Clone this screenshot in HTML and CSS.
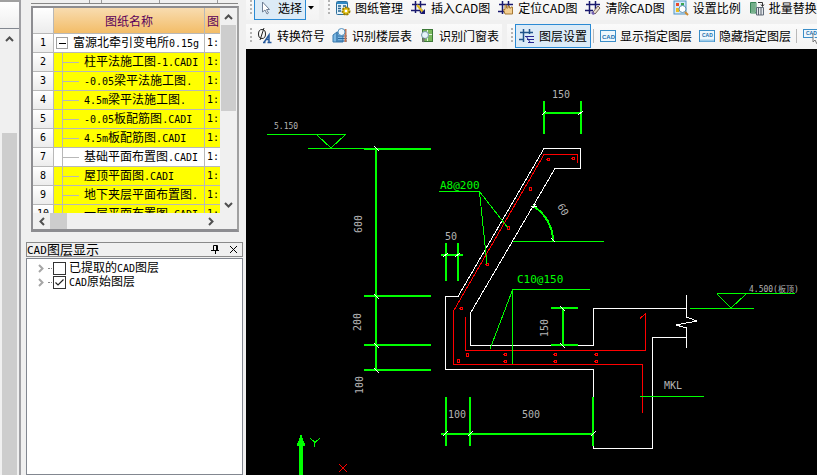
FILE: index.html
```html
<!DOCTYPE html>
<html lang="zh-CN">
<head>
<meta charset="utf-8">
<title>CAD图层</title>
<link rel="stylesheet" href="styles.css">
</head>
<body>
<div class="app">
  <aside class="rail">
    <div class="rail-head"></div>
    <div class="rail-scroll">
      <button class="sb-btn rail-up" aria-label="向上"><svg width="9" height="6"><path class="chev" d="M1 5 4.500 1.500 8 5"/></svg></button>
      <div class="rail-thumb"></div>
    </div>
  </aside>

  <section class="side">
    <div class="tabs"><i class="t1"></i><i class="t2"></i><i class="t3"></i><i class="t4"></i></div>
    <div class="grid-box">
      <div class="grid-view">
        <table class="sheet">
          <colgroup><col class="c-num"><col class="c-name"><col class="c-ratio"></colgroup>
          <thead><tr><th class="num"></th><th>图纸名称</th><th class="ratio">图</th></tr></thead>
          <tbody>
            <tr class="root"><td class="num">1</td><td><button class="fold" aria-label="折叠"></button>富源北牵引变电所<span>0.15g</span></td><td class="ratio">1:</td></tr>
            <tr class="hot"><td class="num">2</td><td class="kid">柱平法施工图<span>-1.CADI</span></td><td class="ratio">1:</td></tr>
            <tr class="hot"><td class="num">3</td><td class="kid"><span>-0.05</span>梁平法施工图<span>.</span></td><td class="ratio">1:</td></tr>
            <tr class="hot"><td class="num">4</td><td class="kid"><span>4.5m</span>梁平法施工图<span>.</span></td><td class="ratio">1:</td></tr>
            <tr class="hot"><td class="num">5</td><td class="kid"><span>-0.05</span>板配筋图<span>.CADI</span></td><td class="ratio">1:</td></tr>
            <tr class="hot"><td class="num">6</td><td class="kid"><span>4.5m</span>板配筋图<span>.CADI</span></td><td class="ratio">1:</td></tr>
            <tr><td class="num">7</td><td class="kid">基础平面布置图<span>.CADI</span></td><td class="ratio">1:</td></tr>
            <tr class="hot"><td class="num">8</td><td class="kid">屋顶平面图<span>.CADI</span></td><td class="ratio">1:</td></tr>
            <tr class="hot"><td class="num">9</td><td class="kid">地下夹层平面布置图<span>.</span></td><td class="ratio">1:</td></tr>
            <tr class="hot"><td class="num">10</td><td class="kid">一层平面布置图<span>.CADI</span></td><td class="ratio">1:</td></tr>
          </tbody>
        </table>
      </div>
      <div class="vbar">
        <button class="sb-btn" aria-label="向上"><svg width="9" height="6"><path class="chev" d="M1 5 4.500 1.500 8 5"/></svg></button>
        <div class="vthumb"></div>
        <button class="sb-btn" aria-label="向下"><svg width="9" height="6"><path class="chev" d="M1 1 4.500 4.500 8 1"/></svg></button>
      </div>
      <div class="hbar">
        <button class="sb-btn" aria-label="向左"><svg width="6" height="9"><path class="chev" d="M5 1 1.500 4.500 5 8"/></svg></button>
        <div class="hthumb"></div>
        <button class="sb-btn hright" aria-label="向右"><svg width="6" height="9"><path class="chev" d="M1 1 4.500 4.500 1 8"/></svg></button>
      </div>
    </div>

    <div class="layers">
      <header class="layers-head">
        <h2><span>CAD</span>图层显示</h2>
        <button aria-label="固定"><svg width="9" height="10"><path d="M2.500 5V.5H6.500V5M5.500 0V5M0 5.500H8M4.500 6V9" fill="none" stroke="#000"/></svg></button>
        <button aria-label="关闭"><svg width="9" height="9"><path d="M1 1 8 8M8 1 1 8" fill="none" stroke="#000"/></svg></button>
      </header>
      <div class="tree">
        <label><svg width="6" height="9"><path class="chev soft" d="M1 1 4.500 4.500 1 8"/></svg><i></i><input type="checkbox"><b>已提取的<span>CAD</span>图层</b></label>
        <label><svg width="6" height="9"><path class="chev soft" d="M1 1 4.500 4.500 1 8"/></svg><i></i><input type="checkbox" checked><b><span>CAD</span>原始图层</b></label>
      </div>
    </div>
  </section>

  <main class="work">
    <div class="toolbar top">
      <div class="strip">
        <b class="grip"></b>
        <button class="tool on pick"><svg width="16" height="16"><path d="M4.500 2V12L7 10 9 14 10.500 13 8.500 9.500H11.500Z" fill="#fff" stroke="#6f7f96"/></svg>选择</button>
        <button class="drop" aria-label="更多选择"><svg width="6" height="4"><path d="M0 0H6L3 3.500Z" fill="#000"/></svg></button>
      </div>
      <div class="strip rest">
        <b class="grip"></b>
        <button class="tool"><svg width="16" height="16"><rect x="1.500" y="1.500" width="11" height="13" rx="1" fill="#e3f2fb" stroke="#2d6f9c"/><path d="M2 2H12V4H2Z" fill="#2f89c5"/><path d="M3 6H6M3 8.500H6M3 11H6M8 6H11" stroke="#24628f" stroke-width="1.500"/><circle cx="11" cy="11" r="3.500" fill="#e8c81c" stroke="#9b7d00" stroke-dasharray="2 1" stroke-width="2"/><circle cx="11" cy="11" r="1.300" fill="#fff"/></svg>图纸管理</button>
        <button class="tool"><svg width="16" height="16"><path d="M4.500 1V13M9.500 1V13M1 4.500H15M0 10.500H12" stroke="#19196e" stroke-width="1.500"/><path d="M6 5 12 12" stroke="#e3bd1e" stroke-width="2"/><path d="M14 9V14H9Z" fill="#19196e"/></svg>插入CAD图</button>
        <button class="tool"><svg width="16" height="16"><path d="M4.500 1V14M10.500 1V7M1 4.500H15M0 11.500H6" stroke="#19196e" stroke-width="1.500"/><path d="M7 14 5.500 9.500H7V5H8.500V8H10V6H11.500V8H13V7H14.500V14Z" fill="#f3cf92" stroke="#a67935"/></svg>定位CAD图</button>
        <button class="tool"><svg width="16" height="16"><path d="M4.500 1V14M10.500 1V9M1 4.500H15M0 10.500H8" stroke="#19196e" stroke-width="1.500"/><path d="M8 12 13 6 15 8 10 14Z" fill="#e9dfcf" stroke="#715f50"/><path d="M6 13 8 11 10 14 8 15Z" fill="#7462b4"/></svg>清除CAD图</button>
        <button class="tool"><svg width="16" height="16"><rect x="1" y="1" width="12" height="13" fill="#d5e9f8" stroke="#4e94c5"/><path d="M3 3H6V6H3Z" fill="#e84a2e"/><path d="M8 3H11V6H8Z" fill="#39a650"/><path d="M3 8H6V12H3Z" fill="#eabd21"/><circle cx="9.500" cy="9" r="3.500" fill="#fff" stroke="#5e91b5"/><path d="M12 12 15 15" stroke="#ce8a31" stroke-width="2"/></svg>设置比例</button>
        <button class="tool"><svg width="16" height="16"><path d="M1.500 2.500H7V13H1.500Z" fill="#c9e6d1" stroke="#378556"/><path d="M3 3V12M5 3V12" stroke="#1f7642"/><path d="M7.500 7.500H14.500V15H7.500Z" fill="#e4e8ec" stroke="#606b78"/><path d="M9.500 8V15M12 8V15" stroke="#59616c"/><path d="M9 2.500H13.500V6M12 4.500 13.500 6.500 15 4.500" fill="none" stroke="#333"/></svg>批量替换</button>
      </div>
    </div>
    <div class="toolbar second">
      <div class="strip">
        <b class="grip"></b>
        <button class="tool"><svg width="16" height="16"><ellipse cx="5" cy="6" rx="3.500" ry="4.500" fill="none" stroke="#222"/><path d="M7 0 3 12" stroke="#222"/><path d="M7 14.500 12 7V14.500M9 11.500H12M6 14.500H8.500M10.500 14.500H14.500" fill="none" stroke="#265a9c" stroke-width="1.500"/></svg>转换符号</button>
        <button class="tool"><svg width="16" height="16"><path d="M1 7 5 4V14H1ZM5 4 11 5V14H5Z" fill="#7db8e2" stroke="#3879ad"/><path d="M6 8H15M6 10.500H15M6 13H15" stroke="#2a69a0"/><path d="M13.500 1V14" stroke="#c57552" stroke-width="2"/><circle cx="9.500" cy="4" r="3.500" fill="#edf7fd" stroke="#5791bc"/></svg>识别楼层表</button>
        <button class="tool"><svg width="16" height="16"><rect x="3.500" y="1.500" width="10" height="12" fill="#79b85c" stroke="#3d7938"/><path d="M8.500 2V13M4 6.500H13" stroke="#e6f3df"/><circle cx="6" cy="7" r="3.500" fill="#e6f4fa" stroke="#7898a9"/><path d="M5 10 4 14" stroke="#777" stroke-width="2"/></svg>识别门窗表</button>
      </div>
      <div class="strip rest">
        <b class="grip"></b>
        <button class="tool on"><svg width="16" height="16"><path d="M4.500 1V14M10.500 1V6M1 4.500H14M0 11.500H5" stroke="#20548b" stroke-width="1.500"/><path d="M6 8.500H15M8 11.500H15M9 14.500H15M7 8 11 14" stroke="#252591" fill="none"/></svg>图层设置</button>
        <b class="sep"></b>
        <button class="tool"><svg width="16" height="14"><rect x=".5" y="1.500" width="15" height="11" fill="#eef7fd" stroke="#3b8ec8"/><text class="mini" x="2" y="10">CAD</text></svg>显示指定图层</button>
        <button class="tool"><svg width="16" height="14"><rect x=".5" y="1.500" width="15" height="11" fill="#eef7fd" stroke="#3b8ec8"/><path d="M1 11.500H15" stroke="#9ccbe9" stroke-width="2"/><text class="mini low" x="3" y="8">CAD</text></svg>隐藏指定图层</button>
        <b class="sep"></b>
        <button class="tool" aria-label="选择图层"><svg width="16" height="16"><rect x=".5" y="1.500" width="15" height="8" fill="#eef7fd" stroke="#3b8ec8"/><text class="mini low" x="3" y="7">CAD</text><path d="M10 5V14L12 12 14 16" fill="#fff" stroke="#777"/></svg></button>
      </div>
    </div>
    <div class="canvas">
      <svg class="drawing" width="571" height="426" viewBox="246 49 571 426">
        <g class="white">
          <path d="M446 369.500H593.500V448.500H652.500V337.500H686.500M445.500 370V296.500H458L544 148.500H580.500V168.500H555L470.500 313V345.500H593.500V308.500H686.500M686.500 295V317L697 321 676 325 686.500 328V348"/>
        </g>
        <g class="red">
          <path d="M577.500 163V154.500H544L453.500 311V364.500H642.500V413M465.500 317V350.500H645.500V313.500L640 318.500M339 464 347 472M347 464 339 472"/>
          <circle cx="548.500" cy="159.500" r="1.500"/><circle cx="573.500" cy="158.500" r="1.500"/><circle cx="530.500" cy="189" r="1.500"/><circle cx="508.500" cy="228" r="1.500"/><circle cx="487.500" cy="264.500" r="1.500"/><circle cx="461.500" cy="308.500" r="1.500"/><circle cx="467.500" cy="355" r="1.500"/><circle cx="458.500" cy="361" r="1.500"/><circle cx="505.500" cy="354.500" r="1.500"/><circle cx="505.500" cy="361.500" r="1.500"/><circle cx="555.500" cy="354.500" r="1.500"/><circle cx="555.500" cy="361.500" r="1.500"/><circle cx="596.500" cy="354.500" r="1.500"/><circle cx="596.500" cy="361.500" r="1.500"/>
        </g>
        <g class="green">
          <path d="M267 134.500H346M317 135 331 148 345 135M308 148.500H364M439 191.500H479.500L508 228M479.500 192 487 264M513 241.500H604M590 289.500H512.500V364M512.500 290 490 349M717 293.500H795M717 294 731 308 746 294M690 308.500H754M640 396.500H704M310 438 315 442.500 320 438M314.500 442V447"/>
          <path class="thick" d="M376 149V371M364 149H431M364 296H431M364 345H431M364 370H431M544 101V134M581 101V134M544 113H581M446 243V281M458 243V281M441 255H463M446 397V446M470 397V446M593 397V446M441 434H593M563 308V345M551 308H578M551 345H578"/>
          <path class="arc" d="M533 206A41 41 0 0 1 553 241"/>
          <path class="fill" d="M300 435H302V438H303V441H304V443H305V446H303V475H299V446H297V443H298V441H299V438H300Z"/>
        </g>
        <g class="white">
          <path d="M374 146 379 151M374 294 379 299M374 343 379 348M374 368 379 373M560 306 565 311M560 343 565 348M542 115 546 111M578 115 583 111M443 257 448 253M455 257 460 253M443 436 448 431M468 436 473 431M591 436 596 431M531 206H537M533 208 536 204M551 238 555 242"/>
        </g>
        <g class="label">
          <text x="552" y="98">150</text>
          <text x="445" y="240">50</text>
          <text x="448" y="418">100</text>
          <text x="522" y="418">500</text>
          <text x="664" y="389">MKL</text>
          <text transform="translate(362 233) rotate(-90)">600</text>
          <text transform="translate(361 331) rotate(-90)">200</text>
          <text transform="translate(363 394) rotate(-90)">100</text>
          <text transform="translate(548 337) rotate(-90)">150</text>
          <text transform="translate(557 206) rotate(60)">60</text>
          <text class="small" x="274" y="129">5.150</text>
          <text class="small" x="749" y="292">4.500(板顶)</text>
          <text class="tag" x="440" y="189">A8@200</text>
          <text class="tag" x="517" y="283">C10@150</text>
        </g>
      </svg>
    </div>
  </main>
</div>
</body>
</html>
```
FILE: styles.css
```css
* { box-sizing: border-box; }
body {
  margin: 0;
  background: #f0f0f0;
  color: #000;
  font: 12px/14px "Noto Sans CJK SC", sans-serif;
}
button {
  margin: 0;
  padding: 0;
  border: 0;
  background: none;
  color: inherit;
  font: inherit;
}
svg { display: block; flex: none; }
.chev { fill: none; stroke: #505050; stroke-width: 2; }
.chev.soft { stroke: #a6a6a6; }

.app {
  display: grid;
  grid-template-columns: 26px 220px minmax(0, 1fr);
  min-height: 100vh;
}

/* left rail */
.rail {
  display: flex;
  flex-direction: column;
  margin-right: 5px;
  border-right: 2px solid #a0a0a4;
}
.rail-head {
  height: 29px;
  border-top: 2px solid #a0a0a0;
  border-bottom: 1px solid #828790;
  background: linear-gradient(#fff, #efefef);
}
.rail-scroll {
  flex: 1;
  display: flex;
  flex-direction: column;
  padding: 0 2px;
}
.sb-btn { display: grid; place-items: center; }
.rail-up { height: 20px; }
.rail-thumb { flex: 1; margin-top: 84px; background: #cdcdcd; }

/* drawing list */
.side { display: flex; flex-direction: column; min-width: 0; }
.tabs {
  display: flex;
  height: 4px;
  margin: 0 8px 2px 5px;
  border-bottom: 1px solid #868686;
}
.tabs i { border-right: 1px solid #9a9a9a; }
.t1 { width: 59px; }
.t2 { width: 12px; }
.t3 { width: 58px; }
.t4 { width: 58px; }
.grid-box {
  display: grid;
  grid-template: 205px 16px / minmax(0, 1fr) 16px;
  margin: 0 7px 10px 5px;
  padding-right: 1px;
  border: 2px solid #8d8d91;
  border-right-color: #a0a0a0;
  border-bottom-width: 3px;
}
.grid-view { overflow: hidden; background: #fff; }
.sheet {
  width: 100%;
  table-layout: fixed;
  border-collapse: separate;
  border-spacing: 0;
}
.c-num { width: 21px; }
.c-name { width: 151px; }
.sheet th, .sheet td {
  height: 19px;
  padding: 0;
  border-right: 1px solid #b8b8b8;
  border-bottom: 1px solid #b8b8b8;
  overflow: hidden;
  white-space: nowrap;
  text-align: left;
  font-weight: 400;
}
.sheet th {
  height: 26px;
  background: linear-gradient(#f8dcb0, #f3bd68);
  color: #5a005a;
  text-align: center;
}
.sheet span, .sheet .num, .sheet td.ratio, .tree span {
  font-family: "DejaVu Sans Mono", monospace;
  font-size: 10px;
}
.sheet .num { background: linear-gradient(#fff, #ececec); text-align: center; }
.sheet .ratio { padding-left: 2px; border-right: 0; text-align: left; }
.hot td { background-color: #ff0; }
.fold {
  float: left;
  width: 12px;
  height: 12px;
  margin: 2px 5px 0 2px;
  border: 1px solid #a0a0a0;
  background: linear-gradient(#000, #000) center / 7px 1px no-repeat #fff;
}
.sheet .kid {
  padding-left: 30px;
  background-image: linear-gradient(#b8b8b8, #b8b8b8), linear-gradient(#b8b8b8, #b8b8b8);
  background-size: 1px 100%, 17px 1px;
  background-position: 8px 0, 8px 9px;
  background-repeat: no-repeat;
}
.vbar { display: flex; flex-direction: column; padding-left: 1px; }
.vbar .sb-btn { height: 17px; }
.vthumb { height: 86px; margin-bottom: auto; background: #cdcdcd; }
.hbar { display: flex; width: 186px; }
.hbar .sb-btn { width: 17px; }
.hthumb { width: 17px; background: #cdcdcd; }
.hright { margin-left: auto; }

/* layer panel */
.layers { flex: 1; display: flex; flex-direction: column; margin-right: 3px; }
.layers-head {
  display: flex;
  align-items: center;
  gap: 9px;
  height: 15px;
  margin-bottom: 1px;
  padding-right: 4px;
  border: 1px solid #8a8a8a;
}
.layers-head h2 { flex: 1; margin: 0; font-size: 13px; font-weight: 400; white-space: nowrap; }
.layers-head h2 span { font-family: "DejaVu Sans Mono", monospace; font-size: 11px; }
.tree {
  flex: 1;
  padding: 2px 0 0 11px;
  border: 1px solid #828790;
  background: #fff;
}
.tree label { display: flex; align-items: center; height: 14px; white-space: nowrap; }
.tree b { font-weight: 400; }
.tree i { width: 4px; margin: 0 1px 0 4px; border-top: 1px dotted #888; }
.tree input {
  appearance: none;
  width: 13px;
  height: 13px;
  margin: 0 3px 0 0;
  border: 1px solid #333;
  background: #fff;
}
.tree input:checked {
  background: url("data:image/svg+xml,%3Csvg xmlns='http://www.w3.org/2000/svg' width='11' height='11'%3E%3Cpath d='M1.500 5.500 4 8 9.500 2.500' fill='none' stroke='%23222' stroke-width='1.200'/%3E%3C/svg%3E") center no-repeat #fff;
}

/* toolbars */
.work { display: flex; flex-direction: column; min-width: 0; }
.toolbar { display: flex; gap: 5px; overflow: hidden; }
.top { height: 20px; align-items: flex-end; margin-bottom: 3px; }
.second { height: 26px; align-items: center; }
.strip {
  display: flex;
  flex: none;
  align-items: center;
  height: 25px;
  padding-left: 3px;
  background: linear-gradient(#fafafa, #f3f3f3);
}
.strip.rest { flex: 1; }
.grip { width: 2px; height: 16px; margin: 0 1px; background: repeating-linear-gradient(#b4b4b4 0 2px, transparent 2px 4px); }
.tool {
  display: flex;
  flex: none;
  align-items: center;
  gap: 4px;
  height: 24px;
  padding: 0 4px;
  white-space: nowrap;
}
.second .tool { padding-right: 3px; }
.tool.on { margin-left: 1px; padding: 0 3px; border: 1px solid #2a8ad4; background: #dcebf7; }
.drop { padding: 0 5px 0 2px; }
.sep { width: 1px; height: 14px; margin: 0 2px; background: #b9b9b9; }
.mini { fill: #1d6fae; font: bold 6px "Liberation Sans", sans-serif; }
.mini.low { font-size: 5px; }

/* drawing area */
.canvas { flex: 1; overflow: hidden; background: #000; }
.drawing path, .drawing circle { fill: none; shape-rendering: crispEdges; }
.white { stroke: #fff; }
.red { stroke: #f00; }
.green { stroke: #0f0; }
.thick, .arc { stroke-width: 2; }
.drawing .fill { fill: #0f0; stroke: none; }
.label { fill: #b4b4b4; font: 10px "DejaVu Sans Mono", "Noto Sans CJK SC", monospace; }
.small { font-size: 8px; }
.tag { fill: #0f0; font-size: 11px; }
```
